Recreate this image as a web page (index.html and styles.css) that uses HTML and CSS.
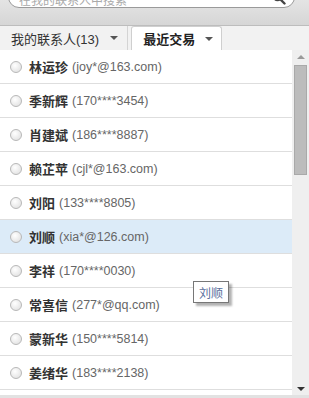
FILE: index.html
```html
<!DOCTYPE html>
<html lang="zh-CN">
<head>
    <meta charset="utf-8">
    <title>最近交易</title>
    <link rel="stylesheet" href="styles.css">
</head>
<body>
    <div class="panel">
        <!-- search strip, mostly scrolled out of view -->
        <div class="search-bar">
            <div class="search-box">
                <span class="placeholder">在我的联系人中搜索</span>
                <svg class="search-icon" width="14" height="14" viewBox="0 0 14 14">
                    <circle cx="5.5" cy="5.5" r="4" fill="none" stroke="#444" stroke-width="1.6"/>
                    <path d="M8.5 8.5 L12.5 12.5" stroke="#444" stroke-width="2.4" stroke-linecap="round"/>
                </svg>
            </div>
        </div>

        <!-- tabs -->
        <div class="tabs">
            <div class="tab">我的联系人(13)<span class="caret"></span></div>
            <div class="tab active">最近交易<span class="caret"></span></div>
        </div>

        <!-- contact list -->
        <div class="list-area">
            <ul class="contacts" id="contacts"></ul>
            <div class="scrollbar">
                <span class="arrow up"></span>
                <div class="track"><div class="thumb"></div></div>
                <span class="arrow down"></span>
            </div>
            <div class="tooltip">刘顺</div>
        </div>
    </div>

    <script>
    const contacts = [
        ['林运珍', '(joy*@163.com)'],
        ['季新辉', '(170****3454)'],
        ['肖建斌', '(186****8887)'],
        ['赖芷苹', '(cjl*@163.com)'],
        ['刘阳', '(133****8805)'],
        ['刘顺', '(xia*@126.com)'],
        ['李祥', '(170****0030)'],
        ['常喜信', '(277*@qq.com)'],
        ['蒙新华', '(150****5814)'],
        ['姜绪华', '(183****2138)'],
    ];
    const list = document.getElementById('contacts');
    contacts.forEach((c, i) => {
        const li = document.createElement('li');
        li.className = 'contact' + (i === 5 ? ' hover' : '');
        li.innerHTML = `<span class="radio"></span><b class="name">${c[0]}</b><span class="info">${c[1]}</span>`;
        list.appendChild(li);
    });
    </script>
</body>
</html>
```

FILE: styles.css
```css
body {
    margin: 0;
    padding: 0;
    background: #fff;
    font-family: "Liberation Sans", "Noto Sans CJK SC", sans-serif;
    color: #333;
}
.panel {
    width: 309px;
    height: 398px;
    overflow: hidden;
    display: flex;
    flex-direction: column;
}
.search-bar {
    height: 25px;
    flex: none;
    background: linear-gradient(#e4e4e4, #d6d6d6);
    border-bottom: 1px solid #bdbdbd;
    padding: 0 14px 0 8px;
}
.search-box {
    margin-top: -14px;
    height: 20px;
    border: 1px solid #9a9a9a;
    border-radius: 11px;
    background: #fff;
    display: flex;
    align-items: center;
    padding: 0 8px 0 10px;
}
.placeholder {
    flex: 1;
    font-size: 12px;
    color: #aaa;
    margin-top: 4px;
}
.search-icon {
    margin-top: 2px;
}
.tabs {
    height: 24px;
    flex: none;
    display: flex;
    align-items: flex-end;
    background: #f2f2f2;
}
.tab {
    height: 24px;
    box-sizing: border-box;
    display: flex;
    align-items: center;
    font-size: 13px;
    color: #333;
    padding: 0 9px 0 11px;
    border-right: 1px solid #d4d4d4;
}
.tab .caret {
    margin-left: 11px;
    border-left: 4px solid transparent;
    border-right: 4px solid transparent;
    border-top: 4px solid #555;
}
.tab.active {
    margin-left: 3px;
    background: #fff;
    font-weight: bold;
    color: #222;
    border: 1px solid #cfcfcf;
    border-bottom: none;
    border-radius: 3px 3px 0 0;
    padding: 0 8px 0 11px;
}
.tab.active .caret {
    margin-left: 10px;
}
.list-area {
    flex: 1;
    display: flex;
    position: relative;
    border-bottom: 3px solid #e2e2e2;
}
.contacts {
    flex: 1;
    list-style: none;
    margin: 0;
    padding: 0;
    overflow: hidden;
}
.contact {
    height: 33px;
    border-bottom: 1px solid #dedede;
    display: flex;
    align-items: center;
    padding-left: 10px;
    font-size: 13px;
}
.contact.hover {
    background: #dcebf8;
}
.radio {
    width: 10px;
    height: 10px;
    border-radius: 50%;
    border: 1px solid #b8b8b8;
    background: radial-gradient(circle at 40% 35%, #fff, #dcdcdc);
    margin-right: 7px;
    flex: none;
}
.name {
    color: #333;
    margin-right: 4px;
}
.info {
    color: #666;
    font-size: 12.5px;
}
.scrollbar {
    width: 17px;
    flex: none;
    background: #efefef;
    display: flex;
    flex-direction: column;
    align-items: center;
}
.arrow {
    border-left: 4px solid transparent;
    border-right: 4px solid transparent;
    flex: none;
}
.arrow.up {
    border-bottom: 4px solid #999;
    margin: 5px 0 6px;
}
.arrow.down {
    border-top: 4px solid #333;
    margin: 0 0 4px;
}
.track {
    flex: 1;
    align-self: stretch;
    padding: 0 2px;
}
.thumb {
    height: 108px;
    background: #bcbcbc;
    border: 1px solid #a9a9a9;
}
.tooltip {
    position: absolute;
    left: 193px;
    top: 231px;
    padding: 2px 5px 1px;
    font-size: 12px;
    color: #5b6f9c;
    background: #fff;
    border: 1px solid #777;
    box-shadow: 3px 3px 2px rgba(0, 0, 0, 0.3);
}
```
